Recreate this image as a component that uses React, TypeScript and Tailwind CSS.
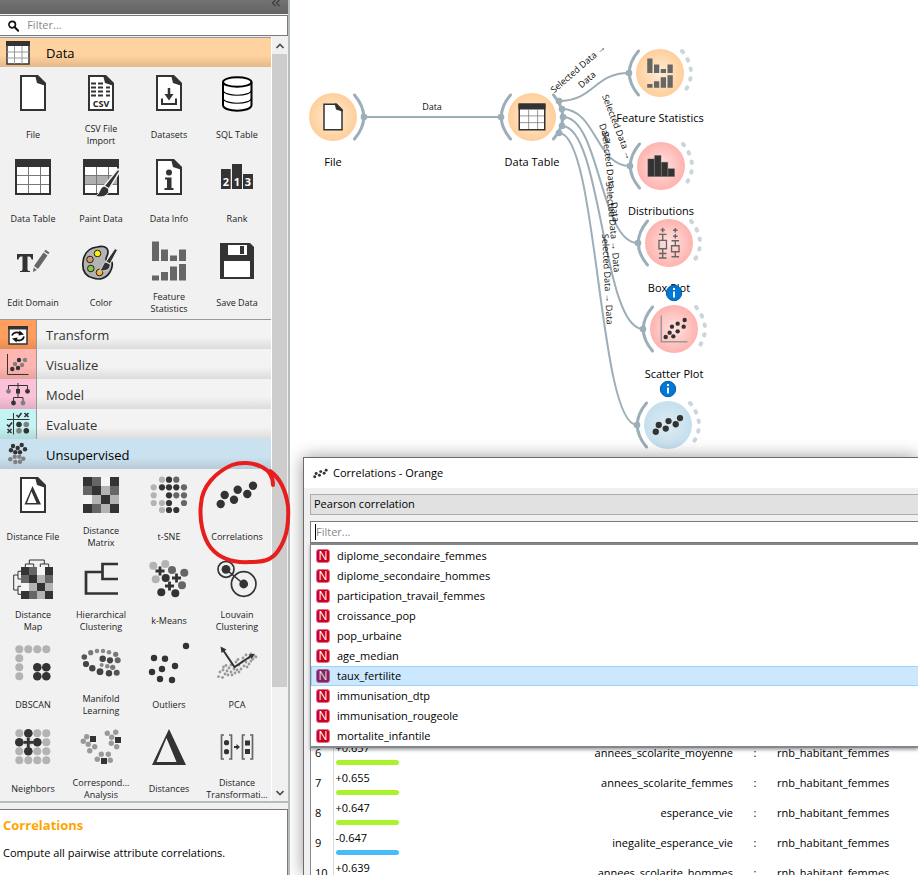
import React from "react";

type Dot = [number, number, number?, string?];

const D = "#333333";
const G = "#666666";
const L = "#b3b3b3";

function Dots({ items, r, fill }: { items: Dot[]; r: number; fill: string }) {
  return (
    <>
      {items.map(([x, y, rr, f], i) => (
        <circle key={i} cx={x} cy={y} r={rr ?? r} fill={f ?? fill} />
      ))}
    </>
  );
}

function Doc() {
  return (
    <>
      <path d="M12 7H28L36 15V41H12Z" fill="#fff" stroke={D} strokeWidth="2" />
      <path d="M26 6H29L37 14V17L28 14Z" fill={D} />
    </>
  );
}

function Grid({ shade }: { shade?: boolean }) {
  return (
    <>
      <path d="M7 7H41V41H7Z" fill="#fff" stroke={D} strokeWidth="2" />
      {shade && <path d="M8 23H40V32H8Z" fill="#b0b0b0" />}
      <path d="M6 6H42V14H6Z" fill={D} />
      <path d="M8 22.500H40M8 31.500H40M19.500 14V40M31.500 14V40" stroke="#777" strokeWidth="1" />
    </>
  );
}

function Brush() {
  return (
    <>
      <path d="M41 16L43 18L32 36L27 33Z" fill={D} stroke="#f1f1f1" strokeWidth="1.500" />
      <path d="M31 35C34 41 27 46 18 43C23 42 22 35 27 33Z" fill={D} stroke="#f1f1f1" strokeWidth="1" />
    </>
  );
}

function Matrix({ x, y, s }: { x: number; y: number; s: number }) {
  const rows = [
    [D, G, "#f5f5f5", D],
    [G, D, L, G],
    ["#f5f5f5", L, D, L],
    [D, G, L, D],
  ];
  return (
    <>
      {rows.map((row, j) =>
        row.map((c, i) => <rect key={`${i}-${j}`} x={x + i * s} y={y + j * s} width={s} height={s} fill={c} />),
      )}
    </>
  );
}

const corrDots: Dot[] = [[40, 14.7], [24.7, 18.7], [34.3, 23], [11.7, 24], [21, 28.7], [7.7, 33]];
const lattice = [10.3, 19.3, 28.3, 37.3];

const glyphs: Record<string, React.ReactNode> = {
  file: <Doc />,
  csv: (
    <>
      <Doc />
      <path
        d="M14 14.500H19M21 14.500H26M14 18.500H19M21 18.500H26M29 18.500H33M14 22.500H19M21 22.500H26M29 22.500H33M14 26.500H19M21 26.500H26M29 26.500H33"
        stroke={D}
        strokeWidth="1.800"
      />
      <text x="24" y="37.500" textAnchor="middle" fontSize="9" fontWeight="700" fill="#222">CSV</text>
    </>
  ),
  datasets: (
    <>
      <Doc />
      <path d="M24 19V28" stroke={D} strokeWidth="2.500" />
      <path d="M19.500 25H28.500L24 31.500Z" fill={D} />
      <path d="M17 29.500V35H31V29.500" fill="none" stroke={D} strokeWidth="2" />
    </>
  ),
  sql: (
    <g stroke="#000" strokeWidth="2" fill="#fff">
      <path d="M10 13V36C10 43.500 38.500 43.500 38.500 36V13" />
      <path d="M10 21C10 28 38.500 28 38.500 21M10 29C10 36 38.500 36 38.500 29" fill="none" strokeWidth="1.200" />
      <ellipse cx="24.250" cy="13" rx="14.250" ry="4.800" />
    </g>
  ),
  table: <Grid />,
  paint: (
    <>
      <Grid shade />
      <Brush />
    </>
  ),
  info: (
    <>
      <Doc />
      <circle cx="24" cy="19.500" r="3" fill={D} />
      <path d="M20 24.500H26.500V35H28.500V37H19.500V35H22V26.500H20Z" fill={D} />
    </>
  ),
  rank: (
    <>
      <path d="M8 16H17.700V36H8ZM19 11H29V36H19ZM30 21H40V36H30Z" fill={D} />
      <g fill="#fff" fontSize="11" fontWeight="700" textAnchor="middle">
        <text x="13" y="33">2</text>
        <text x="24" y="33">1</text>
        <text x="35" y="33">3</text>
      </g>
    </>
  ),
  edit: (
    <>
      <path d="M8 17H24V22.500H22.500C22 20 21 19.500 18.500 19.500V32C18.500 33.500 19 34 21 34V35H11V34C13 34 13.500 33.500 13.500 32V19.500C11 19.500 10 20 9.500 22.500H8Z" fill={D} />
      <path d="M25 29L34.500 15.500L38.500 18.500L29 32Z M35.200 14.500L36.500 12.800L40.500 15.500L39.300 17.300Z M24.600 30.500L27.800 33L24 35Z" fill={G} />
    </>
  ),
  color: (
    <>
      <path d="M20 10C29 8 33 12 30 19C28 23 29 24 33 24C37 24 35 32 33 35C29 42 22 43 16 41C8 39 5 33 6 25C7 16 12 11 20 10Z" fill="#b3b3b3" stroke="#222" strokeWidth="1.700" />
      <g stroke="#222" strokeWidth="1">
        <circle cx="20.500" cy="16.500" r="3.300" fill="#fff200" />
        <circle cx="13" cy="22.500" r="3.300" fill="#c69c6d" />
        <circle cx="13.800" cy="31.500" r="3.300" fill="#8cc63f" />
        <circle cx="22.500" cy="35.500" r="3.300" fill="#fbb03b" />
      </g>
      <path d="M38 11.500L40.500 13L33 27L29 24.500Z" fill={D} stroke="#f1f1f1" />
      <path d="M33 27C34 32 29 35 22 33.500C26 32 25 27 28.500 25Z" fill={D} stroke="#f1f1f1" strokeWidth="0.800" />
    </>
  ),
  stats: (
    <path
      d="M7 4.500H14V24H7ZM16 12.500H23V24H16ZM25 18.500H32V24H25ZM34 12.500H41V24H34ZM7 38.500H14V43.500H7ZM16 35H23V43.500H16ZM25 29.500H32V43.500H25ZM34 27H41V43.500H34Z"
      fill={G}
    />
  ),
  save: (
    <>
      <path d="M7 6H37L41 10V42H7Z" fill={D} />
      <path d="M15 8H34V18H15ZM11 24H37V40H11Z" fill="#fff" />
      <path d="M27 9H31V17H27Z" fill={D} />
    </>
  ),
  distfile: (
    <>
      <Doc />
      <path fillRule="evenodd" d="M23.500 15L32 33.500H15.500ZM22.500 20.500L18 32H27.500Z" fill={D} />
    </>
  ),
  matrix: <Matrix x={6} y={6} s={9} />,
  tsne: (
    <>
      <Dots r={3.1} fill={L} items={[[17, 8.7], [8.7, 16.3], [8.7, 24.3], [8.7, 32], [17, 32], [17, 39]]} />
      <Dots r={3.1} fill={G} items={[[31.3, 8.7], [39, 16.3], [31.3, 24.3], [39, 24.3], [39, 32]]} />
      <Dots r={3.1} fill={D} items={[[24, 8.7], [17, 16.3], [24, 16.3], [31.3, 16.3], [24, 24.3], [24, 32], [24, 39], [31.3, 39]]} />
    </>
  ),
  corr: <Dots r={4.2} fill={D} items={corrDots} />,
  distmap: (
    <>
      <Matrix x={12} y={12} s={8} />
      <path
        d="M20.300 9V5H35.300V9M16.300 12V9H24.700V12M31.300 12V9H39.700V12M9 20H4.700V35H9M12 16.300H9V24H12M12 31.300H9V39.300H12"
        fill="none"
        stroke={D}
        strokeWidth="1"
      />
    </>
  ),
  hier: <path d="M41 9H25.500V24H41M25.500 17H9V38.500H41" fill="none" stroke={D} strokeWidth="2.700" />,
  kmeans: (
    <>
      <Dots r={4} fill={L} items={[[8.3, 10.7], [20.3, 9], [10.7, 24.3]]} />
      <Dots r={4} fill={G} items={[[27, 15], [39.3, 17.7], [37, 30.3]]} />
      <Dots r={4} fill={D} items={[[20.7, 23], [16.3, 37.3], [30.3, 38.3]]} />
      <path d="M10.500 16H19.500M15 11.500V20.500M27 23H36M31.500 18.500V27.500M20 31H29M24.500 26.500V35.500" stroke={D} strokeWidth="2.800" />
    </>
  ),
  louvain: (
    <>
      <path d="M13 14.300L30.700 29" stroke={D} strokeWidth="1.500" />
      <g fill="none" stroke={D} strokeWidth="1.700">
        <circle cx="13" cy="14.300" r="8" />
        <circle cx="30.700" cy="29" r="12.300" />
      </g>
      <Dots r={4.4} fill={D} items={[[13, 14.3], [30.7, 29]]} />
    </>
  ),
  dbscan: (
    <>
      <Dots r={4} fill={L} items={[[10.3, 10.3], [19.3, 10.3], [28.3, 10.3], [37.3, 10.3], [10.3, 19.3], [10.3, 28.3], [10.3, 37.3]]} />
      <Dots r={4.3} fill={D} items={[[28.3, 28.3], [37.3, 28.3], [28.3, 37.3], [37.3, 37.3]]} />
    </>
  ),
  manifold: (
    <Dots
      r={2.8}
      fill="#555"
      items={[
        [13.7, 13.7, 2.6, "#777"], [20, 12, 2.3, "#888"], [26, 12, 2.2, "#888"], [32, 13.3, 2.3, "#888"], [38.7, 15.3, 2.6, "#777"],
        [40.7, 21.3, 3, "#666"], [33, 21.3, 3.1, "#444"], [25.7, 19.7, 3.2, "#444"], [7.3, 18, 2.8], [9, 25, 3.1, "#444"],
        [15.3, 29.3, 3.2, "#444"], [23, 32.7, 3.4, "#444"], [32, 34.3, 3.2, "#444"], [39.7, 33.7, 3],
        [35.7, 28.3, 2.6, "#777"], [30.3, 27.3, 2.3, "#888"], [24.7, 26, 2, "#888"],
      ]}
    />
  ),
  outliers: (
    <Dots r={3.2} fill={D} items={[[41, 7], [9, 19], [20, 19.7], [30, 27], [17, 30], [7, 33], [15, 40], [27, 41]]} />
  ),
  pca: (
    <>
      <Dots
        r={1.4}
        fill="#999"
        items={[
          [5.5, 37.7], [9.5, 38.5], [7, 33], [10, 31], [12, 35], [14, 32], [15, 36], [10.5, 28], [13, 26.5], [16, 29], [18, 33], [19, 36],
          [21, 30], [22, 34], [18, 26], [24, 31], [26, 33], [23, 23], [26, 26], [28, 30], [25, 20.5], [29, 23], [31, 27], [30, 19],
          [33, 23], [34, 28], [33, 16], [36, 19], [38, 22], [36, 25], [40, 20], [41, 16.5], [43, 18], [38, 15],
        ]}
      />
      <path d="M10 11L21.500 28L38 17" fill="none" stroke={D} strokeWidth="2" />
      <path d="M7.500 7.500L13.500 10.500L8.500 14ZM41.500 14.700L38.700 20L35.500 15.500Z" fill={D} />
    </>
  ),
  neighbors: (
    <>
      <Dots r={4} fill={L} items={lattice.flatMap((y) => lattice.map((x): Dot => [x, y]))} />
      <Dots r={4.3} fill={D} items={[[19.3, 10.3], [10.3, 19.3], [28.3, 19.3], [19.3, 28.3]]} />
      <circle cx="19.300" cy="19.300" r="4.500" fill="#d8d8d8" />
      <path d="M14.500 19.300H24M19.300 14.500V24" stroke={D} strokeWidth="2.800" />
    </>
  ),
  corresp: (
    <>
      <Dots
        r={2.7}
        fill="#999"
        items={[
          [9.7, 13.7], [6.3, 18.3], [11.3, 21.3], [17.7, 23.7], [12.7, 27.7], [30.3, 10.3], [38.7, 9.3], [34.7, 14.3],
          [34.3, 20.3], [39.7, 23.7], [24.3, 31.3], [31.3, 31.3], [20.3, 36.3], [33.3, 37.3],
        ]}
      />
      <path d="M13 13H19V19H13ZM38 14H44V20H38ZM24 35H30V41H24Z" fill={D} />
    </>
  ),
  distances: <path fillRule="evenodd" d="M24 6L41 42H7ZM21.500 15L11.500 39H31.500Z" fill={D} />,
  transf: (
    <>
      <path d="M11 12H8.500V36H11M16 12H18.500V36H16M32 12H29.500V36H32M37 12H39.500V36H37" fill="none" stroke={G} strokeWidth="1.700" />
      <Dots r={2.6} fill={D} items={[[13.5, 19.7], [13.5, 28.7]]} />
      <path d="M32 17.500H37V22.500H32ZM32 26H37V31H32Z" fill={D} />
      <path d="M21 24H24.500" stroke={D} strokeWidth="2" />
      <path d="M23.500 21L27 24L23.500 27Z" fill={D} />
    </>
  ),
  bars: <path d="M6.500 14.500H15V38H6.500ZM15.500 10H24V38H15.500ZM24.500 19H33V38H24.500ZM33.500 27.500H42V38H33.500Z" fill={D} stroke="#555" strokeWidth="0.500" />,
  box: (
    <g fill="none" stroke={G} strokeWidth="1.800">
      <path d="M15.600 3.500V9.500M12.600 6.500H18.600M10.600 12.400H20.600M15.600 12.400V20.400M10.600 20.400H20.600V31.600H10.600ZM15.600 31.600V44M10.600 38H20.600M10.600 44H20.600" />
      <path d="M32.400 4V10M29.400 7H35.400M32.400 12V18M29.400 15H35.400M27.400 21H37.400M32.400 21V27.600M27.400 27.600H37.400V35.600H27.400ZM32.400 35.600V42.300M27.400 42.300H37.400" />
    </g>
  ),
  scatter: (
    <>
      <path d="M7 6V41H42" fill="none" stroke="#999" strokeWidth="2" />
      <Dots r={2.9} fill={D} items={[[12.9, 34.7], [23.1, 33.8], [18.2, 28.9], [28.9, 27.1], [21.3, 20.9], [36.9, 20.9], [28.9, 16.9], [38.2, 12]]} />
    </>
  ),
};

function Glyph({ name, className }: { name: string; className: string }) {
  return (
    <svg viewBox="0 0 48 48" className={className} aria-hidden="true">
      {glyphs[name]}
    </svg>
  );
}

const dataWidgets: [string, string][] = [
  ["file", "File"], ["csv", "CSV File Import"], ["datasets", "Datasets"], ["sql", "SQL Table"],
  ["table", "Data Table"], ["paint", "Paint Data"], ["info", "Data Info"], ["rank", "Rank"],
  ["edit", "Edit Domain"], ["color", "Color"], ["stats", "Feature Statistics"], ["save", "Save Data"],
];

const unsupervisedWidgets: [string, string][] = [
  ["distfile", "Distance File"], ["matrix", "Distance Matrix"], ["tsne", "t-SNE"], ["corr", "Correlations"],
  ["distmap", "Distance Map"], ["hier", "Hierarchical Clustering"], ["kmeans", "k-Means"], ["louvain", "Louvain Clustering"],
  ["dbscan", "DBSCAN"], ["manifold", "Manifold Learning"], ["outliers", "Outliers"], ["pca", "PCA"],
  ["neighbors", "Neighbors"], ["corresp", "Correspond... Analysis"], ["distances", "Distances"], ["transf", "Distance Transformati..."],
];

function WidgetGrid({ widgets }: { widgets: [string, string][] }) {
  return (
    <div className="-ml-px grid grid-cols-4">
      {widgets.map(([icon, label]) => (
        <button key={label} type="button" className="flex h-[84px] flex-col items-center pt-0.5">
          <Glyph name={icon} className="size-12 shrink-0" />
          <span className="flex h-[34px] w-14 items-center justify-center pt-0.5 text-center text-[9px] leading-3 text-[#222]">
            {label}
          </span>
        </button>
      ))}
    </div>
  );
}

const sectionIcons: Record<string, React.ReactNode> = {
  Data: (
    <>
      <path d="M7 4H29V26H7Z" fill="#fff" stroke={D} strokeWidth="1.500" />
      <path d="M6 3H30V8H6Z" fill={D} />
      <path d="M7 14H29M7 20H29M14.500 8V26M22 8V26" stroke="#999" />
    </>
  ),
  Transform: (
    <>
      <path d="M9 7H27V24H9Z" fill="#fff" stroke={D} strokeWidth="1.500" />
      <path d="M8 6H28V9.500H8Z" fill={D} />
      <path d="M12 15.500C13 12.500 17 11.500 20 13.500M24 16.500C23 20.500 19 21.500 15.500 19.500" fill="none" stroke="#111" strokeWidth="1.800" />
      <path d="M19.500 10.500L24 14.500L18.500 15.500ZM16.500 22.500L12 18.500L17.500 17.500Z" fill="#111" />
    </>
  ),
  Visualize: (
    <>
      <path d="M7.500 5V25.500H28.500" fill="none" stroke={D} />
      <Dots r={2.2} fill={D} items={[[12.3, 20], [18, 19], [19, 11]]} />
      <Dots r={2.2} fill="#808080" items={[[15, 15], [22, 16], [25, 11]]} />
    </>
  ),
  Model: (
    <>
      <path d="M8.500 12V6.500H27.500V12M18 4V12M13.500 24V18.500H23V24M18 12V18.500" fill="none" stroke={D} />
      <Dots r={2.4} fill={D} items={[[27.5, 12.3], [13.5, 24]]} />
      <Dots r={2.4} fill="#808080" items={[[8.5, 12.3], [23, 24]]} />
      <path d="M16 10H20V14.500H16Z" fill={D} />
    </>
  ),
  Evaluate: (
    <>
      <path d="M13.500 4V25.500M7 10.500H29.500" stroke={D} />
      <Dots r={2.8} fill={D} items={[[19, 15.5], [26.3, 21.7]]} />
      <Dots r={2.8} fill="#808080" items={[[26.3, 15.5], [19, 21.7]]} />
      <path d="M16.500 6L18.500 8L21.500 4M24.500 4L28.500 8M28.500 4L24.500 8M7 15.500L9 17.500L12 13.500M7.500 20L11.500 24M11.500 20L7.500 24" fill="none" stroke={D} strokeWidth="1.600" />
    </>
  ),
  Unsupervised: (
    <>
      <Dots r={2.2} fill={D} items={[[13, 7], [21.7, 6], [11, 11.3], [15.3, 13.3], [20, 13.3], [25, 10.3], [17.7, 9]]} />
      <Dots r={2.2} fill="#808080" items={[[14.7, 17.7], [19.3, 17.7], [10.3, 20.3], [15.3, 23], [20, 22.7], [23.3, 19.7]]} />
    </>
  ),
};

function Section({ name, tint, open, ruled }: { name: string; tint: string; open?: boolean; ruled?: boolean }) {
  return (
    <button
      type="button"
      aria-expanded={!!open}
      className={`flex h-[30px] w-full items-stretch overflow-hidden text-left text-[13px] ${ruled ? "border-t border-[#999]" : ""} ${
        open ? `text-black ${tint}` : "bg-linear-to-b from-[#f3f3f3] from-60% to-[#dcdcdc] text-[#333]"
      }`}
    >
      <span className={`w-9 shrink-0 ${open ? "" : tint}`}>
        <svg viewBox="0 0 36 30" className="h-[30px] w-9" aria-hidden="true">
          {sectionIcons[name]}
        </svg>
      </span>
      <span className={`flex items-center pt-[3px] pl-[9px] ${open ? "ml-px" : "border-l border-[#999]"}`}>{name}</span>
    </button>
  );
}

function Sidebar() {
  return (
    <aside className="relative z-10 flex w-[290px] shrink-0 flex-col border-r-2 border-[#b4bcbc] bg-[#f0f0f0]">
      <div className="flex h-[14px] justify-end bg-linear-to-b from-[#737373] to-[#636363] pr-[7px]">
        <button type="button" aria-label="Collapse" className="h-[14px]">
          <svg viewBox="0 0 10 14" className="h-[14px] w-2.5" aria-hidden="true">
            <path d="M4.500 0L1.500 3L4.500 6M8.500 0L5.500 3L8.500 6" fill="none" stroke="#3c3c3c" strokeWidth="1.300" />
          </svg>
        </button>
      </div>
      <label className="mt-px mb-px flex h-[21px] items-center border border-l-0 border-[#7a7a7a] bg-white pl-2">
        <svg viewBox="0 0 12 12" className="size-3" aria-hidden="true">
          <circle cx="4.500" cy="4.500" r="3.500" fill="none" stroke="#111" strokeWidth="1.800" />
          <path d="M7 7L11 11" stroke="#111" strokeWidth="2.200" strokeLinecap="round" />
        </svg>
        <input
          aria-label="Filter widgets"
          placeholder="Filter..."
          className="ml-2 w-full min-w-0 bg-transparent text-[11px] outline-none placeholder:text-[#888]"
        />
      </label>
      <div className="flex min-h-0 flex-1 border-b-2 border-[#b4bcbc]">
        <div className="min-w-0 flex-1 overflow-hidden bg-[#f1f1f1]">
          <Section name="Data" open ruled tint="bg-linear-to-b from-[#ffd3a0] from-60% to-[#e4b888]" />
          <WidgetGrid widgets={dataWidgets} />
          <Section name="Transform" ruled tint="bg-linear-to-b from-[#ff9e5e] from-60% to-[#e68c52]" />
          <Section name="Visualize" tint="bg-linear-to-b from-[#ffb5b0] from-60% to-[#e6a29e]" />
          <Section name="Model" tint="bg-linear-to-b from-[#fac1d9] from-60% to-[#e1adc3]" />
          <Section name="Evaluate" tint="bg-linear-to-b from-[#c3f3f3] from-60% to-[#b0dada]" />
          <Section name="Unsupervised" open tint="bg-linear-to-b from-[#cae1ef] from-60% to-[#b6cbd7]" />
          <WidgetGrid widgets={unsupervisedWidgets} />
        </div>
        <div className="flex w-[17px] shrink-0 flex-col border-l border-white bg-[#f0f0f0]">
          <button type="button" aria-label="Scroll up" className="flex h-[17px] items-center justify-center">
            <svg viewBox="0 0 8 6" className="h-1.5 w-2" aria-hidden="true">
              <path d="M0.500 5L4 1.500L7.500 5" fill="none" stroke="#505050" strokeWidth="1.700" />
            </svg>
          </button>
          <div className="flex-1">
            <div className="h-13/15 w-[15px] bg-[#cdcdcd]" />
          </div>
          <button type="button" aria-label="Scroll down" className="flex h-[17px] items-center justify-center">
            <svg viewBox="0 0 8 6" className="h-1.5 w-2" aria-hidden="true">
              <path d="M0.500 1L4 4.500L7.500 1" fill="none" stroke="#505050" strokeWidth="1.700" />
            </svg>
          </button>
        </div>
      </div>
      <section className="mt-1.5 h-[66px] border-t border-r border-[#7a7a7a] bg-white px-[3px] pt-[5px]">
        <h2 className="text-[13px] leading-5 font-bold text-[#ffa500]">Correlations</h2>
        <p className="mt-2 text-[11px] leading-5 text-black">Compute all pairwise attribute correlations.</p>
      </section>
    </aside>
  );
}

type NodeDef = { icon: string; label?: string; place: string; tone: string; arcs: "out" | "both" | "linked"; badge?: boolean };

const orange = "bg-[radial-gradient(circle,#ffecd6_0%,#ffcf9b_70%)]";
const red = "bg-[radial-gradient(circle,#ffe3e1_0%,#ffb3af_70%)]";
const blue = "bg-[radial-gradient(circle,#deebf2_0%,#c5dfee_70%)]";

const nodes: NodeDef[] = [
  { icon: "file", label: "File", place: "left-[19px] top-[93px]", tone: orange, arcs: "out" },
  { icon: "table", label: "Data Table", place: "left-[218px] top-[93px]", tone: orange, arcs: "linked" },
  { icon: "stats", label: "Feature Statistics", place: "left-[346px] top-[49px]", tone: orange, arcs: "both" },
  { icon: "bars", label: "Distributions", place: "left-[347px] top-[142px]", tone: red, arcs: "both" },
  { icon: "box", label: "Box Plot", place: "left-[355px] top-[219px]", tone: red, arcs: "both" },
  { icon: "scatter", label: "Scatter Plot", place: "left-[360px] top-[305px]", tone: red, arcs: "both", badge: true },
  { icon: "corr", place: "left-[354px] top-[401px]", tone: blue, arcs: "both", badge: true },
];

function WidgetNode({ node }: { node: NodeDef }) {
  return (
    <div className={`absolute size-12 ${node.place}`}>
      <svg viewBox="-10 0 68 48" className="absolute top-0 -left-2.5 h-12 w-[68px]" fill="none" strokeWidth="3" strokeLinecap="round" aria-hidden="true">
        {node.arcs !== "out" && <path d="M2.500 2Q-16 24 2.500 46" stroke="#9caeb7" />}
        {node.arcs !== "both" && <path d="M45.500 2Q64 24 45.500 46" stroke="#9caeb7" />}
        {node.arcs === "both" && <path d="M46 2Q64 24 46 46" stroke="#ccd5d9" strokeWidth="4" strokeDasharray="1.500 8.300" />}
      </svg>
      <div className={`relative flex size-12 items-center justify-center rounded-full ${node.tone}`}>
        <Glyph name={node.icon} className="size-9" />
      </div>
      {node.label && (
        <div className="absolute top-[60px] left-1/2 -translate-x-1/2 text-[11px] leading-[18px] whitespace-nowrap text-black">
          {node.label}
        </div>
      )}
      {node.badge && (
        <svg viewBox="0 0 18 18" className="absolute -top-[21px] left-[15px] size-[18px]" aria-label="Information">
          <circle cx="9" cy="9" r="7.700" fill="#0078d7" stroke="#0a5aa0" />
          <path d="M8 4H10V6H8ZM8 7.500H10V13.500H8Z" fill="#fff" />
        </svg>
      )}
    </div>
  );
}

const ports: [number, number][] = [
  [364, 117], [501, 117], [559, 101], [562, 109], [563, 117], [562, 126], [559, 133],
  [629, 73], [630, 166], [638, 243], [643, 329], [637, 425],
];

function Links() {
  return (
    <svg viewBox="290 0 628 458" className="absolute top-0 left-0 h-[458px] w-[628px]" aria-hidden="true">
      <g fill="none" stroke="#9caeb7" strokeWidth="2">
        <path d="M364 117H501" />
        <path d="M559 101C594 101 594 73 629 73" />
        <path d="M562 109C596 109 596 166 630 166" />
        <path d="M563 117C600 117 600 243 638 243" />
        <path d="M562 126C602 126 602 329 643 329" />
        <path d="M559 133C598 133 598 425 637 425" />
      </g>
      {ports.map(([x, y]) => (
        <circle key={`${x}-${y}`} cx={x} cy={y} r="3.300" fill="#9caeb7" />
      ))}
    </svg>
  );
}

function LinkLabels() {
  return (
    <svg viewBox="290 0 628 458" className="pointer-events-none absolute top-0 left-0 h-[458px] w-[628px] text-[9px]" fill="#111">
      <text x="432" y="110" textAnchor="middle">Data</text>
      <g textAnchor="middle">
        <text transform="translate(580 71) rotate(-41)">Selected Data →</text>
        <text transform="translate(589 82) rotate(-41)">Data</text>
      </g>
      <text transform="translate(602 96) rotate(69)">Selected Data →</text>
      <text transform="translate(599 125) rotate(69)">Data</text>
      <text transform="translate(602 132) rotate(83)">Selected Data → Data</text>
      <text transform="translate(606 182) rotate(85)">Selected Data → Data</text>
      <text transform="translate(602 234) rotate(87)">Selected Data → Data</text>
    </svg>
  );
}

const variables = [
  "diplome_secondaire_femmes", "diplome_secondaire_hommes", "participation_travail_femmes", "croissance_pop", "pop_urbaine",
  "age_median", "taux_fertilite", "immunisation_dtp", "immunisation_rougeole", "mortalite_infantile",
];

const results = [
  { n: 6, value: "+0.657", name: "annees_scolarite_moyenne" },
  { n: 7, value: "+0.655", name: "annees_scolarite_femmes" },
  { n: 8, value: "+0.647", name: "esperance_vie" },
  { n: 9, value: "-0.647", name: "inegalite_esperance_vie" },
  { n: 10, value: "+0.639", name: "annees_scolarite_hommes" },
];

function CorrelationsWindow() {
  return (
    <section className="absolute top-[457px] right-0 bottom-0 left-[13px] flex flex-col overflow-hidden border-t border-l border-[#6b6b6b] bg-[#f0f0f0] text-[11px] text-black shadow-[0_0_16px_rgba(0,0,0,0.4)]">
      <header className="flex h-[30px] shrink-0 items-center gap-1 bg-white pl-2">
        <Glyph name="corr" className="size-[17px]" />
        <h1>Correlations - Orange</h1>
      </header>
      <div className="flex min-h-0 flex-1 flex-col pt-1.5 pl-1.5">
        <select
          aria-label="Correlation type"
          className="h-[21px] w-full shrink-0 appearance-none border border-r-0 border-[#adadad] bg-[#e1e1e1] pl-[3px] outline-none"
        >
          <option>Pearson correlation</option>
        </select>
        <div className="mt-1.5 flex h-[22px] shrink-0 items-center border border-r-0 border-[#7a7a7a] bg-white pl-1">
          <span className="h-4 w-px bg-black" />
          <input
            aria-label="Filter variables"
            placeholder="Filter..."
            className="w-full min-w-0 bg-transparent outline-none placeholder:text-[#8a8a8a]"
          />
        </div>
        <ul role="listbox" aria-label="Variables" className="relative z-10 shrink-0 border-y-2 border-l border-[#828790] bg-white pt-px shadow-[0_2px_3px_rgba(0,0,0,0.35)]">
          {variables.map((v) => {
            const active = v === "taux_fertilite";
            return (
              <li key={v} role="option" aria-selected={active}>
                <button
                  type="button"
                  className={`flex h-5 w-full items-center border border-r-0 pl-1 text-left ${active ? "border-[#99d1ff] bg-[#cce8ff]" : "border-transparent"}`}
                >
                  <span
                    className={`mr-[7px] flex size-[14px] items-center justify-center rounded-[3px] border text-[12px] leading-none ${
                      active ? "border-[#a86a96] bg-[#8e1f58] text-[#cce8ff]" : "border-[#e27088] bg-[#cc0022] text-white"
                    }`}
                  >
                    N
                  </span>
                  {v}
                </button>
              </li>
            );
          })}
        </ul>
        <div className="-mt-2.5 min-h-0 flex-1 overflow-hidden border-l border-[#828790] bg-white">
          <table className="w-full table-fixed border-collapse">
            <colgroup>
              <col className="w-[22px]" />
              <col className="w-[100px]" />
              <col />
              <col className="w-11" />
              <col className="w-[141px]" />
            </colgroup>
            <tbody>
              {results.map((r) => (
                <tr key={r.n} className="h-[30px]">
                  <th scope="row" className="border-r border-[#d9d9d9] p-0 pl-1 text-left font-normal">{r.n}</th>
                  <td className="p-0 pl-0.5 align-top">
                    <div className="leading-5">{r.value}</div>
                    <div className={`mt-0.5 h-[5px] w-[63px] rounded-full ${r.value.startsWith("-") ? "bg-[#46bdfa]" : "bg-[#aaf22b]"}`} />
                  </td>
                  <td className="p-0 text-right">{r.name}</td>
                  <td className="p-0 text-center">:</td>
                  <td className="p-0">rnb_habitant_femmes</td>
                </tr>
              ))}
            </tbody>
          </table>
        </div>
      </div>
    </section>
  );
}

export default function App() {
  return (
    <div className="relative flex h-screen overflow-hidden bg-white font-['Open_Sans','Noto_Sans',sans-serif]">
      <Sidebar />
      <main className="relative min-w-0 flex-1 overflow-hidden bg-white">
        <Links />
        {nodes.map((n) => (
          <WidgetNode key={n.icon} node={n} />
        ))}
        <LinkLabels />
        <CorrelationsWindow />
      </main>
      <svg viewBox="0 0 100 110" className="pointer-events-none absolute top-[458px] left-[194px] z-20 h-[110px] w-[100px]" aria-hidden="true">
        <path
          d="M79 27C79 18 74 12 68 9C58 4 46 4 38 7C22 14 8 28 7 46C5 62 9 80 17 90C27 102 40 105 56 104C68 104 77 103 84 93C93 80 95 66 94 48C92 34 86 20 76 13"
          fill="none"
          stroke="#e81e1e"
          strokeWidth="4"
          strokeLinecap="round"
          strokeLinejoin="round"
        />
      </svg>
    </div>
  );
}
